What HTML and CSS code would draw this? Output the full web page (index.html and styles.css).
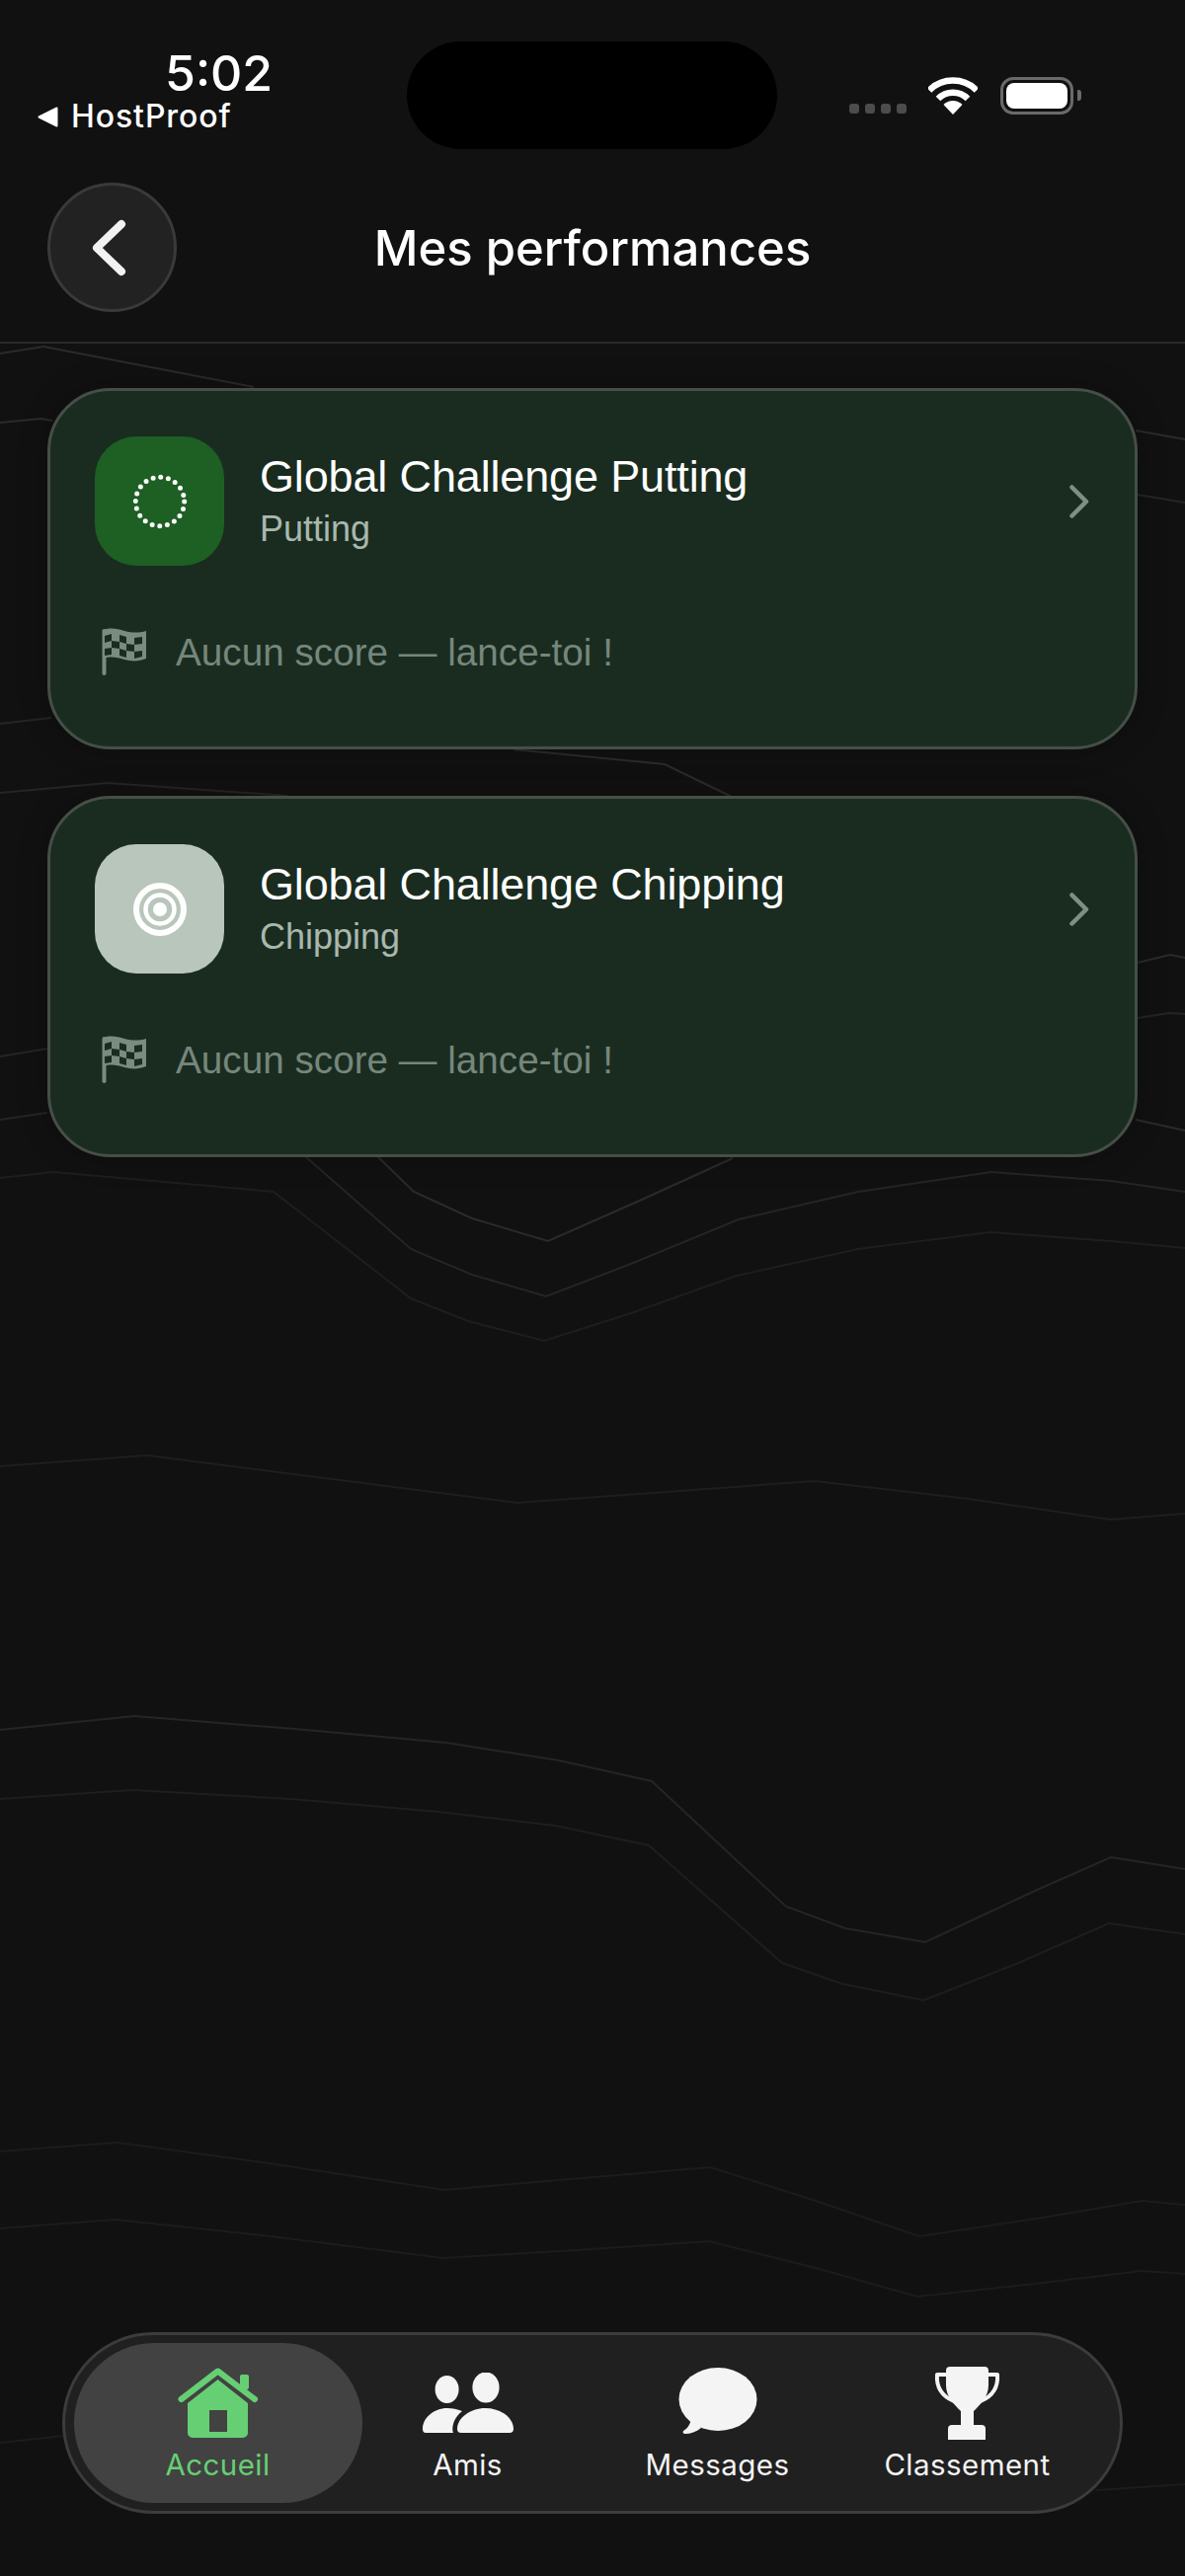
FILE: index.html
```html
<!DOCTYPE html>
<html lang="fr">
<head>
<meta charset="utf-8">
<title>Mes performances</title>
<link rel="stylesheet" href="styles.css">
</head>
<body>
<div class="phone">
  <svg class="contours" width="1200" height="2609" viewBox="0 0 1200 2609" aria-hidden="true">
    <g class="c-strong">
      <polyline points="0,358 44,351 257,392"/>
      <polyline points="0,428 42,424 53,426"/>
      <polyline points="520,759 673,774 741,807"/>
      <polyline points="383,1172 419,1207 478,1234 555,1257 650,1215 742,1173"/>
      <polyline points="1150,436 1200,445"/>
      <polyline points="1152,975 1185,967 1200,970"/>
      <polyline points="1150,1134 1200,1145"/>
    </g>
    <g class="c-mid">
      <polyline points="0,733 52,727"/>
      <polyline points="0,803 109,793 291,806"/>
      <polyline points="0,1070 48,1062"/>
      <polyline points="0,1134 48,1127"/>
      <polyline points="1152,501 1200,509"/>
      <polyline points="1152,1031 1184,1026 1200,1027"/>
      <polyline points="310,1172 416,1265 478,1291 553,1313 639,1280 748,1235 869,1207 1004,1187 1125,1196 1200,1207"/>
      <polyline points="0,1752 136,1738 298,1751 452,1765 566,1783 660,1804 796,1931 856,1953 937,1967 1048,1915 1125,1881 1200,1893"/>
    </g>
    <g class="c-faint">
      <polyline points="0,1193 54,1187 277,1207 416,1315 474,1338 551,1358 639,1330 746,1292 869,1265 1003,1248 1125,1257 1200,1264"/>
      <polyline points="0,1485 149,1474 524,1522 825,1500 980,1518 1125,1539 1200,1533"/>
      <polyline points="0,1822 134,1813 295,1822 444,1835 562,1849 657,1869 792,1988 852,2009 935,2026 1029,1989 1123,1948 1200,1959"/>
    </g>
    <g class="c-dim">
      <polyline points="0,2179 119,2170 272,2191 450,2218 589,2206 719,2195 826,2229 931,2265 1056,2246 1156,2229 1200,2233"/>
      <polyline points="0,2257 117,2248 275,2265 449,2287 582,2279 718,2270 826,2297 929,2326 1048,2313 1156,2300 1200,2303"/>
      <polyline points="0,2474 65,2467"/>
      <polyline points="1110,2522 1200,2516"/>
    </g>
  </svg>

  <div class="island"></div>

  <header class="status">
    <div class="status-left">
      <div class="clock">5:02</div>
      <div class="host">
        <svg class="host-arrow" width="21" height="21" viewBox="0 0 21 21"><path d="M19.5 1.5 V19.5 L1.5 10.5 Z"/></svg>
        <span>HostProof</span>
      </div>
    </div>
    <div class="status-right">
      <div class="signal"><i></i><i></i><i></i><i></i></div>
      <svg class="wifi" width="50" height="38" viewBox="0 0 50 38">
        <path class="wifi-arc" d="M1 13.5 A34 34 0 0 1 49 13.5"/>
        <path class="wifi-arc" d="M10 22 A21 21 0 0 1 40 22"/>
        <path class="wifi-dot" d="M25 38 L15.5 28 A13.5 13.5 0 0 1 34.5 28 Z"/>
      </svg>
      <div class="battery"><div class="battery-level"></div></div>
      <div class="battery-nub"></div>
    </div>
  </header>

  <div class="topbar">
    <button class="back" type="button" aria-label="Retour">
      <svg width="36" height="60" viewBox="0 0 36 60"><path d="M31 6 L6 30 L31 54"/></svg>
    </button>
    <h1 class="page-title">Mes performances</h1>
    <div class="topbar-spacer"></div>
  </div>

  <main class="cards">
    <article class="card">
      <div class="card-head">
        <div class="badge badge-green">
          <svg width="60" height="60" viewBox="0 0 60 60"><circle class="ring-dots" cx="30" cy="30" r="24.7"/></svg>
        </div>
        <div class="card-text">
          <div class="card-title">Global Challenge Putting</div>
          <div class="card-sub">Putting</div>
        </div>
        <svg class="chev" width="20" height="34" viewBox="0 0 20 34"><path d="M2.5 2.5 L17 17 L2.5 31.5"/></svg>
      </div>
      <div class="card-foot">
        <svg class="flag" width="46" height="49" viewBox="0 0 46 49">
          <rect class="flag-pole" x="0.5" y="1" width="4" height="47" rx="2"/>
          <path class="flag-cloth" d="M2 2 C9 -1 16 1 23 3 C31 5 38 5 45 3 V31 C38 34 30 34 23 32 C16 30 9 28 2 31 Z"/>
          <path class="flag-cell" d="M3 8 L10 6 V13 L3 15 Z M18 7 L25 9 V16 L18 14 Z M33 10 L41 9 V16 L33 17 Z M10 13 L18 14 V21 L10 20 Z M25 16 L33 17 V24 L25 23 Z M3 21 L10 20 V27 L3 28 Z M18 21 L25 23 V30 L18 28 Z M33 24 L41 23 V29 L33 31 Z"/>
        </svg>
        <span class="card-empty">Aucun score — lance-toi !</span>
      </div>
    </article>

    <article class="card">
      <div class="card-head">
        <div class="badge badge-pale">
          <svg width="60" height="60" viewBox="0 0 60 60">
            <circle class="target-ring" cx="30" cy="30" r="24" stroke-width="6"/>
            <circle class="target-ring" cx="30" cy="30" r="14.5" stroke-width="4.5"/>
            <circle class="target-dot" cx="30" cy="30" r="7"/>
          </svg>
        </div>
        <div class="card-text">
          <div class="card-title">Global Challenge Chipping</div>
          <div class="card-sub">Chipping</div>
        </div>
        <svg class="chev" width="20" height="34" viewBox="0 0 20 34"><path d="M2.5 2.5 L17 17 L2.5 31.5"/></svg>
      </div>
      <div class="card-foot">
        <svg class="flag" width="46" height="49" viewBox="0 0 46 49">
          <rect class="flag-pole" x="0.5" y="1" width="4" height="47" rx="2"/>
          <path class="flag-cloth" d="M2 2 C9 -1 16 1 23 3 C31 5 38 5 45 3 V31 C38 34 30 34 23 32 C16 30 9 28 2 31 Z"/>
          <path class="flag-cell" d="M3 8 L10 6 V13 L3 15 Z M18 7 L25 9 V16 L18 14 Z M33 10 L41 9 V16 L33 17 Z M10 13 L18 14 V21 L10 20 Z M25 16 L33 17 V24 L25 23 Z M3 21 L10 20 V27 L3 28 Z M18 21 L25 23 V30 L18 28 Z M33 24 L41 23 V29 L33 31 Z"/>
        </svg>
        <span class="card-empty">Aucun score — lance-toi !</span>
      </div>
    </article>
  </main>

  <nav class="tabbar">
    <a class="tab tab-active">
      <span class="tab-icon">
        <svg width="84" height="76" viewBox="0 0 84 76">
          <rect x="64" y="9" width="9" height="15" rx="2"/>
          <path class="roof" d="M4.5 34 L41.6 5.5 L79 34"/>
          <path fill-rule="evenodd" d="M41.6 14 L72 38 V68 a5 5 0 0 1 -5 5 H16 a5 5 0 0 1 -5 -5 V38 Z M33 45 V67 H51 V45 Z"/>
        </svg>
      </span>
      <span class="tab-label">Accueil</span>
    </a>
    <a class="tab">
      <span class="tab-icon">
        <svg width="94" height="62" viewBox="0 0 94 62">
          <ellipse cx="25.6" cy="17" rx="12" ry="14"/>
          <ellipse cx="65" cy="15" rx="13.6" ry="15.5"/>
          <path d="M40 61 H89 q4 0 4 -4 C93 46 80 36 64.5 36 C49 36 36 46 36 57 q0 4 4 4 Z"/>
          <path d="M4 61 H32 C30 56 32 46 41 39 C36 37 31 36 26 36 C12 36 1 46 1 57 q0 4 3 4 Z"/>
        </svg>
      </span>
      <span class="tab-label">Amis</span>
    </a>
    <a class="tab">
      <span class="tab-icon">
        <svg width="80" height="72" viewBox="0 0 80 72">
          <ellipse cx="40" cy="32" rx="39.5" ry="32"/>
          <path d="M13 52 C12 57 9 62 5 64 C4 66 5 67 7 67 C12 67 18 65 23 61 Z"/>
        </svg>
      </span>
      <span class="tab-label">Messages</span>
    </a>
    <a class="tab">
      <span class="tab-icon">
        <svg width="69" height="77" viewBox="0 0 69 77">
          <path class="handle" d="M15 9 H4 C3 22 9 31 21 36"/>
          <path class="handle" d="M54 9 H65 C66 22 60 31 48 36"/>
          <path d="M13 5 q0 -4 4 -4 H52 q4 0 4 4 V20 C56 32 47 40 41 46 H28 C22 40 13 32 13 20 Z"/>
          <rect x="28" y="44" width="13" height="20"/>
          <path d="M15 75 V64 q0 -4 4 -4 H49 q4 0 4 4 V75 Z"/>
        </svg>
      </span>
      <span class="tab-label">Classement</span>
    </a>
  </nav>
</div>
</body>
</html>
```

FILE: styles.css
```css
* { box-sizing: border-box; }

html, body {
  margin: 0;
  padding: 0;
  background: #111111;
}

.phone {
  position: relative;
  width: 1200px;
  height: 2609px;
  overflow: hidden;
  display: flex;
  flex-direction: column;
  background: #111111;
  font-family: "Inter", "Liberation Sans", sans-serif;
  color: #ffffff;
}

.contours {
  position: absolute;
  inset: 0;
}
.contours polyline { fill: none; stroke-width: 2; }
.c-strong polyline { stroke: #2b2b2b; }
.c-mid polyline { stroke: #252525; }
.c-faint polyline { stroke: #1e1e1e; }
.c-dim polyline { stroke: #1c1c1c; }

.island {
  position: absolute;
  left: 412px;
  top: 42px;
  width: 375px;
  height: 109px;
  border-radius: 55px;
  background: #000000;
}

/* status bar */
.status {
  position: relative;
  height: 185px;
  padding: 49px 105px 0 38px;
  display: flex;
  justify-content: space-between;
  align-items: flex-start;
}
.status-left { display: flex; flex-direction: column; gap: 3px; }
.clock {
  margin-left: 129px;
  font-size: 50px;
  line-height: 50px;
  font-weight: 500;
}
.host {
  display: flex;
  align-items: center;
  gap: 13px;
  font-size: 32px;
  line-height: 32px;
  font-weight: 500;
  letter-spacing: 0.9px;
}
.host-arrow path {
  fill: #ffffff;
  stroke: #ffffff;
  stroke-width: 2;
  stroke-linejoin: round;
}
.status-right {
  margin-top: 29px;
  display: flex;
  align-items: flex-end;
}
.signal { display: flex; gap: 6px; margin: 0 22px 1px 0; }
.signal i {
  width: 10px;
  height: 10px;
  border-radius: 3px;
  background: #4c4c4c;
}
.wifi { display: block; margin-right: 23px; }
.wifi-arc { fill: none; stroke: #ffffff; stroke-width: 6.5; }
.wifi-dot { fill: #ffffff; }
.battery {
  width: 74px;
  height: 38px;
  padding: 3px;
  border: 3px solid #6a6a6a;
  border-radius: 13px;
}
.battery-level {
  width: 100%;
  height: 100%;
  border-radius: 8px;
  background: #ffffff;
}
.battery-nub {
  width: 4px;
  height: 11px;
  margin: 0 0 14px 4px;
  border-radius: 0 3px 3px 0;
  background: #6a6a6a;
}

/* top bar */
.topbar {
  position: relative;
  height: 163px;
  padding: 0 48px 31px;
  display: grid;
  grid-template-columns: 131px 1fr 131px;
  align-items: center;
  border-bottom: 2px solid #2a2a2a;
}
.back {
  width: 131px;
  height: 131px;
  padding: 0;
  display: flex;
  align-items: center;
  justify-content: center;
  border: 3px solid #3a3a3a;
  border-radius: 50%;
  background: #222222;
}
.back svg { margin-right: 8px; }
.back path {
  fill: none;
  stroke: #f2f2f2;
  stroke-width: 8;
  stroke-linecap: round;
  stroke-linejoin: round;
}
.page-title {
  margin: 2px 0 0;
  text-align: center;
  font-size: 49px;
  line-height: 60px;
  font-weight: 500;
}

/* cards */
.cards {
  position: relative;
  padding: 45px 48px 0;
  display: flex;
  flex-direction: column;
  gap: 47px;
}
.card {
  height: 366px;
  padding: 46px 46px 0 45px;
  border: 3px solid #454f47;
  border-radius: 64px;
  background: #1a2c20;
  box-shadow: 0 0 30px rgba(0, 0, 0, 0.25);
  font-family: "Liberation Sans", Arial, sans-serif;
}
.card-head { display: flex; align-items: center; gap: 36px; }
.badge {
  flex: none;
  width: 131px;
  height: 131px;
  display: flex;
  align-items: center;
  justify-content: center;
  border-radius: 42px;
}
.badge-green { background: #1e5f24; }
.badge-pale { background: #b8c6bb; }
.ring-dots {
  fill: none;
  stroke: #ffffff;
  stroke-width: 5;
  stroke-linecap: round;
  stroke-dasharray: 0 7.76;
}
.target-ring { fill: none; stroke: #ffffff; }
.target-dot { fill: #ffffff; }
.card-text { flex: 1; min-width: 0; }
.card-title {
  font-size: 45px;
  line-height: 55px;
  color: #ffffff;
  letter-spacing: -0.15px;
}
.card-sub {
  font-size: 36px;
  line-height: 51px;
  color: #a8b8ae;
}
.chev { flex: none; }
.chev path {
  fill: none;
  stroke: #7f8f85;
  stroke-width: 4.5;
  stroke-linecap: round;
  stroke-linejoin: round;
}
.card-foot {
  margin-top: 63px;
  padding-left: 7px;
  display: flex;
  align-items: center;
  gap: 29px;
}
.flag { flex: none; }
.flag-pole, .flag-cloth { fill: #7a8c80; }
.flag-cell { fill: #1a2c20; }
.card-empty {
  font-size: 38.7px;
  line-height: 48px;
  color: #75877c;
}

/* tab bar */
.tabbar {
  position: relative;
  margin: auto 63px 63px;
  height: 184px;
  padding: 0 28px;
  display: grid;
  grid-template-columns: repeat(4, 1fr);
  border: 3px solid #3c3c3c;
  border-radius: 92px;
  background: #202020;
}
.tab {
  position: relative;
  padding-top: 29px;
  display: flex;
  flex-direction: column;
  align-items: center;
  color: #f4f4f4;
}
.tab-active { color: #66cf74; }
.tab-active::before {
  content: "";
  position: absolute;
  left: -19px;
  right: -20px;
  top: 8px;
  bottom: 8px;
  border-radius: 81px;
  background: #424242;
}
.tab-icon {
  position: relative;
  height: 80px;
  display: flex;
  align-items: center;
  justify-content: center;
}
.tab-icon svg { display: block; fill: currentColor; }
.roof, .handle {
  fill: none;
  stroke: currentColor;
  stroke-linecap: round;
  stroke-linejoin: round;
}
.roof { stroke-width: 6; }
.handle { stroke-width: 4; }
.tab-label {
  position: relative;
  margin-top: 2px;
  font-size: 29.5px;
  line-height: 40px;
  font-weight: 400;
  letter-spacing: 0.45px;
}
```
